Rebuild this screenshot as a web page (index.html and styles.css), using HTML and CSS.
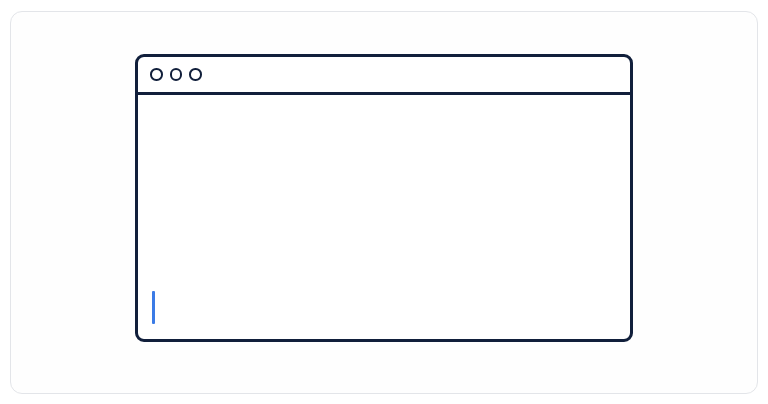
FILE: index.html
```html
<!DOCTYPE html>
<html lang="en">
<head>
<meta charset="utf-8">
<title>Browser window</title>
<link rel="stylesheet" href="styles.css">
</head>
<body>
<div class="card">
  <div class="window">
    <div class="titlebar">
      <span class="dot"></span>
      <span class="dot"></span>
      <span class="dot"></span>
    </div>
    <div class="content">
      <span class="caret"></span>
    </div>
  </div>
</div>
</body>
</html>
```

FILE: styles.css
```css
html, body {
  margin: 0;
  padding: 0;
  background: #ffffff;
  font-family: "Liberation Sans", Arial, sans-serif;
}

.card {
  box-sizing: border-box;
  margin: 11px 10px 0 10px;
  height: 383px;
  border: 1px solid #e3e5e9;
  border-radius: 12px;
  background: #fefefe;
  display: flex;
  justify-content: center;
  align-items: flex-start;
  padding-top: 42px;
}

.window {
  box-sizing: border-box;
  width: 498px;
  height: 288px;
  border: 3px solid #111f3b;
  border-radius: 9px;
  background: #ffffff;
  display: flex;
  flex-direction: column;
}

.titlebar {
  box-sizing: border-box;
  height: 38px;
  border-bottom: 3px solid #111f3b;
  display: flex;
  align-items: center;
  gap: 7px;
  padding-left: 12px;
}

.dot {
  box-sizing: border-box;
  width: 12.5px;
  height: 12.5px;
  border: 2.2px solid #111f3b;
  border-radius: 50%;
}

.content {
  flex: 1;
  display: flex;
  flex-direction: column;
  justify-content: flex-end;
  padding: 0 0 15px 14px;
}

.caret {
  display: block;
  width: 3px;
  height: 33px;
  background: #3b7be6;
  border-radius: 1px;
}
```
